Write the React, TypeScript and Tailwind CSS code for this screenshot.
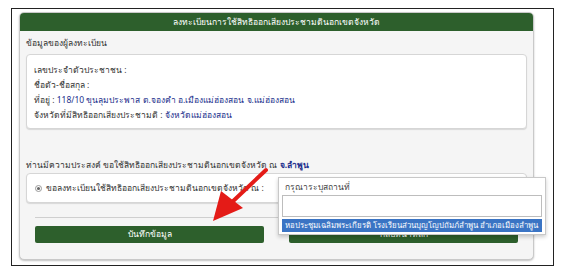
import React from "react";

const font = { fontFamily: "Tahoma, 'Noto Sans', 'DejaVu Sans', sans-serif" };

export default function App() {
  return (
    <div className="w-[565px] h-[275px] bg-white overflow-hidden" style={font}>
      <div className="relative ml-[11px] mt-[8px] w-[543px] h-[258px] border border-[#222] bg-white pl-[7px] pt-[3px]">
        {/* Main panel */}
        <div className="w-[515px] h-[248px] rounded-[5px] border border-[#c9c9c9] bg-[#f5f5f5] flex flex-col overflow-hidden shadow-[0_1px_2px_rgba(0,0,0,0.25)]">
          <div className="h-[18px] bg-[#2d5f2c] text-white text-[8.5px] flex items-center justify-center">
            ลงทะเบียนการใช้สิทธิออกเสียงประชามตินอกเขตจังหวัด
          </div>
          <div className="flex flex-col px-[6px] pt-[5px] text-[8.5px] text-[#333]">
            <div className="h-[14px] leading-[14px]">ข้อมูลของผู้ลงทะเบียน</div>
            <div className="mt-[4px] h-[75px] rounded-[4px] border border-[#d6d6d6] bg-white shadow-[0_1px_1px_rgba(0,0,0,0.12)] px-[7px] pt-[7px] flex flex-col">
              <div className="h-[15px] leading-[15px]">เลขประจำตัวประชาชน :</div>
              <div className="h-[15px] leading-[15px]">ชื่อตัว-ชื่อสกุล :</div>
              <div className="h-[15px] leading-[15px]">
                ที่อยู่ : <span className="text-[#1c2f8c]">118/10 ขุนลุมประพาส ต.จองคำ อ.เมืองแม่ฮ่องสอน จ.แม่ฮ่องสอน</span>
              </div>
              <div className="h-[15px] leading-[15px]">
                จังหวัดที่มีสิทธิออกเสียงประชามติ : <span className="text-[#1c2f8c]">จังหวัดแม่ฮ่องสอน</span>
              </div>
            </div>
            <div className="mt-[29px] h-[14px] leading-[14px]">
              ท่านมีความประสงค์ ขอใช้สิทธิออกเสียงประชามตินอกเขตจังหวัด ณ{" "}
              <span className="text-[#1c2f8c] font-bold">จ.ลำพูน</span>
            </div>
            <div className="mt-[1px] h-[30px] rounded-[4px] border border-[#d6d6d6] bg-white shadow-[0_1px_1px_rgba(0,0,0,0.12)] px-[8px] flex items-center gap-[4px]">
              <span className="w-[7px] h-[7px] rounded-full border border-[#999] bg-white flex items-center justify-center">
                <span className="w-[3px] h-[3px] rounded-full bg-[#666]" />
              </span>
              <span>ขอลงทะเบียนใช้สิทธิออกเสียงประชามตินอกเขตจังหวัด ณ :</span>
            </div>
            <div className="mt-[14px] mx-[9px] border-t border-[#cfcfcf]" />
            <div className="mt-[8px] mx-[9px] flex gap-[25px]">
              <div className="flex-1 h-[17px] rounded-[2px] bg-[#2d5f2c] text-white text-[8.5px] flex items-center justify-center">
                บันทึกข้อมูล
              </div>
              <div className="flex-1 h-[17px] rounded-[2px] bg-[#2d5f2c] text-white text-[8.5px] flex items-center justify-center">
                กลับหน้าหลัก
              </div>
            </div>
          </div>
        </div>

        {/* Dropdown overlay */}
        <div className="absolute left-[266px] top-[168px] w-[268px] h-[58px] bg-white border border-[#c8c8c8] shadow-[0_2px_4px_rgba(0,0,0,0.2)] flex flex-col px-[3px] text-[8.5px] text-[#444]">
          <div className="h-[16px] leading-[16px] pl-[3px] pt-[1px]">กรุณาระบุสถานที่</div>
          <div className="mt-[1px] h-[22px] border border-[#bdbdbd] bg-white" />
          <div className="mt-[2px] h-[13px] bg-[#3a74c4] text-white text-[7.8px] leading-[13px] pl-[3px] whitespace-nowrap overflow-hidden">
            หอประชุมเฉลิมพระเกียรติ โรงเรียนส่วนบุญโญปถัมภ์ลำพูน อำเภอเมืองลำพูน
          </div>
        </div>

        {/* Red arrow */}
        <svg className="absolute left-[190px] top-[152px]" width="70" height="66" viewBox="0 0 70 66">
          <line x1="64" y1="9" x2="28" y2="43" stroke="#e41b17" strokeWidth="4" strokeLinecap="round" />
          <polygon points="11,60 19,30 41,47" fill="#e41b17" />
        </svg>
      </div>
    </div>
  );
}
